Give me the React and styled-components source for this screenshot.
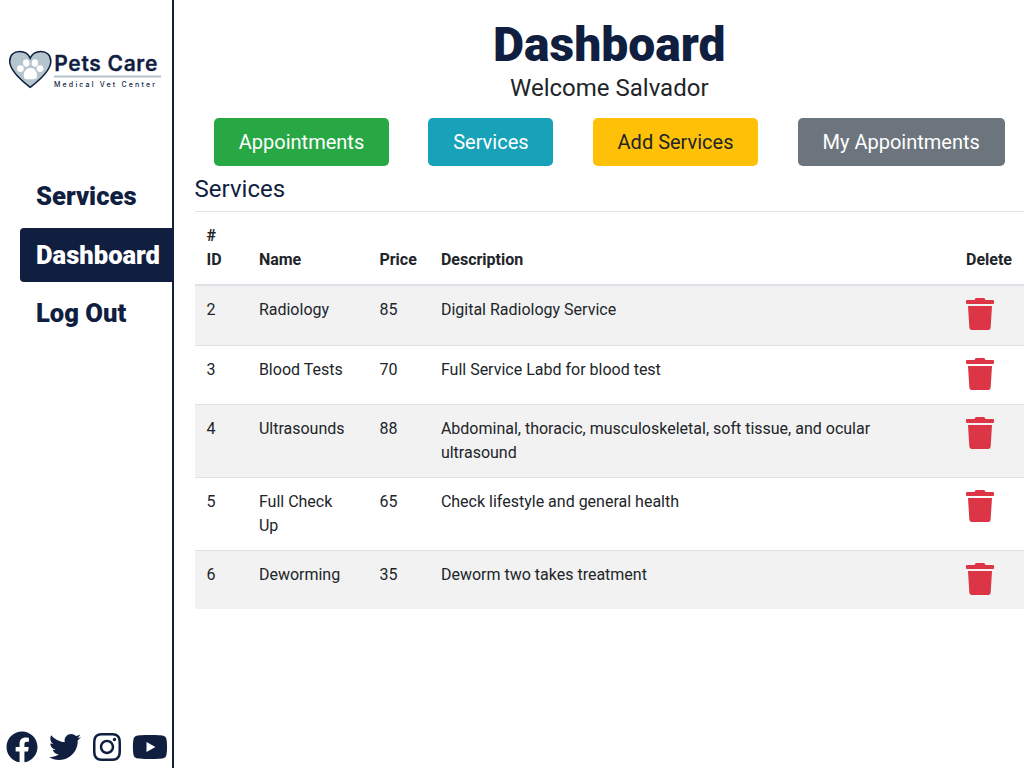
import React from "react";
import styled, { createGlobalStyle } from "styled-components";
import { FaFacebook, FaTwitter, FaInstagram, FaYoutube, FaTrash } from "react-icons/fa";

const navy = "#101e3f";

const GlobalStyle = createGlobalStyle`
  *, *::before, *::after { box-sizing: border-box; }
  body {
    margin: 0;
    background: #fff;
    color: #212529;
    font: 400 16px/1.5 Roboto, "Liberation Sans", sans-serif;
    overflow: hidden;
  }
`;

const Page = styled.div`
  display: flex;
  height: 768px;
`;

const Sidebar = styled.aside`
  display: flex;
  flex-direction: column;
  flex: none;
  width: 174px;
  border-right: 2px solid #14213d;
`;

const LogoImage = styled.svg`
  display: block;
  width: 172px;
  height: 60px;
  margin-top: 40px;
`;

const Nav = styled.nav`
  display: flex;
  flex-direction: column;
  gap: 4.2px;
  margin-top: 69.4px;
  padding-left: 20px;
`;

const NavLink = styled.a`
  height: 54.2px;
  padding: 8px 16px;
  border-radius: 4px 0 0 4px;
  background: ${(p) => (p.$active ? navy : "transparent")};
  color: ${(p) => (p.$active ? "#fff" : navy)};
  font-size: 25.6px;
  font-weight: 900;
  line-height: 38.4px;
`;

const Socials = styled.div`
  display: flex;
  gap: 11.1px;
  margin-top: auto;
  padding: 0 0 5px 6px;
  color: ${navy};

  svg { flex: none; width: 32px; height: 32px; }
  svg:nth-child(3) { width: 28px; margin-left: 0.4px; }
  svg:nth-child(4) { width: 36px; }
`;

const Main = styled.main`
  flex: 1;
  min-width: 0;
  padding: 16px 0 0 20.6px;
`;

const Title = styled.h1`
  margin: 0;
  color: ${navy};
  font-size: 48px;
  font-weight: 900;
  line-height: 58px;
  text-align: center;
`;

const Welcome = styled.p`
  margin: 0;
  font-size: 24px;
  line-height: 29px;
  text-align: center;
`;

const Actions = styled.div`
  display: flex;
  justify-content: space-between;
  margin-top: 15px;
  padding: 0 19.3px 0 19.3px;
`;

const Button = styled.button`
  height: 48px;
  padding: 0 24.9px;
  border: 0;
  border-radius: 4.8px;
  background: ${(p) => p.$bg};
  color: ${(p) => p.$color || "#fff"};
  font: 400 20px/30px Roboto, sans-serif;
`;

const SectionTitle = styled.h2`
  margin: 9px 0 7.25px;
  color: ${navy};
  font-size: 24px;
  font-weight: 400;
  line-height: 29px;
`;

const Table = styled.table`
  width: 829.4px;
  table-layout: fixed;
  border-collapse: collapse;
`;

const Col = styled.col`
  width: ${(p) => p.$w};
`;

const HeadCell = styled.th`
  padding: 12px;
  border-top: 1px solid #dee2e6;
  border-bottom: 2px solid #dee2e6;
  font-weight: 700;
  text-align: left;
  vertical-align: bottom;
`;

const Row = styled.tr`
  &:nth-child(odd) { background: #f2f2f2; }
`;

const Cell = styled.td`
  padding: 12px;
  border-top: 1px solid #dee2e6;
  vertical-align: top;
`;

const DescriptionCell = styled(Cell)`
  padding-right: 60px;
`;

const TrashIcon = styled(FaTrash)`
  display: block;
  width: 28px;
  height: 32px;
  margin-bottom: 2.3px;
  color: #dc3545;
`;

const services = [
  { id: 2, name: "Radiology", price: 85, description: "Digital Radiology Service" },
  { id: 3, name: "Blood Tests", price: 70, description: "Full Service Labd for blood test" },
  { id: 4, name: "Ultrasounds", price: 88, description: "Abdominal, thoracic, musculoskeletal, soft tissue, and ocular ultrasound" },
  { id: 5, name: "Full Check Up", price: 65, description: "Check lifestyle and general health" },
  { id: 6, name: "Deworming", price: 35, description: "Deworm two takes treatment" },
];

function Logo() {
  return (
    <LogoImage viewBox="0 0 172 60">
      <path
        d="M30.2 47.3C24 42.5 9.7 31 9.7 21.2C9.7 15 14 11.4 19.5 11.4C24.5 11.4 28.5 14 30.2 18.2C32 14 36 11.4 41 11.4C46.5 11.4 50.8 15 50.8 21.2C50.8 31 36.5 42.5 30.2 47.3Z"
        fill="#b5c5cd"
        stroke={navy}
        strokeWidth="1.5"
      />
      <g fill="#fff">
        <ellipse cx="26.2" cy="23" rx="3.2" ry="3.7" transform="rotate(-8 26.2 23)" />
        <ellipse cx="34.8" cy="23" rx="3.2" ry="3.7" transform="rotate(8 34.8 23)" />
        <ellipse cx="20.4" cy="28.6" rx="3.4" ry="3.4" />
        <ellipse cx="40" cy="28.6" rx="3.4" ry="3.4" />
        <path d="M30.4 27.8C34.5 27.8 37.4 32 37 36.2C36.6 39.8 33.2 39.2 30.4 39.2S24.2 39.8 23.8 36.2C23.4 32 26.3 27.8 30.4 27.8Z" />
      </g>
      <text x="54.3" y="30.5" fill={navy} stroke={navy} strokeWidth="0.3" fontFamily="Inter, sans-serif" fontWeight="600" fontSize="21" textLength="103" lengthAdjust="spacing">
        Pets Care
      </text>
      <path d="M54 36.5H161" stroke="#b5c5cd" strokeWidth="2.2" />
      <text x="54" y="46.5" fill={navy} fontFamily="Inter, sans-serif" fontWeight="500" fontSize="7" textLength="101" lengthAdjust="spacing">
        Medical Vet Center
      </text>
    </LogoImage>
  );
}

export default function App() {
  return (
    <>
      <GlobalStyle />
      <Page>
        <Sidebar>
          <Logo />
          <Nav>
            <NavLink>Services</NavLink>
            <NavLink $active>Dashboard</NavLink>
            <NavLink>Log Out</NavLink>
          </Nav>
          <Socials>
            <FaFacebook />
            <FaTwitter />
            <FaInstagram />
            <FaYoutube />
          </Socials>
        </Sidebar>
        <Main>
          <Title>Dashboard</Title>
          <Welcome>Welcome Salvador</Welcome>
          <Actions>
            <Button $bg="#28a745">Appointments</Button>
            <Button $bg="#17a2b8">Services</Button>
            <Button $bg="#ffc107" $color="#212529">Add Services</Button>
            <Button $bg="#6c757d">My Appointments</Button>
          </Actions>
          <SectionTitle>Services</SectionTitle>
          <Table>
            <colgroup>
              <Col $w="52.3px" />
              <Col $w="120.5px" />
              <Col $w="61.5px" />
              <Col $w="525.1px" />
              <Col $w="70px" />
            </colgroup>
            <thead>
              <tr>
                <HeadCell># ID</HeadCell>
                <HeadCell>Name</HeadCell>
                <HeadCell>Price</HeadCell>
                <HeadCell>Description</HeadCell>
                <HeadCell>Delete</HeadCell>
              </tr>
            </thead>
            <tbody>
              {services.map((s) => (
                <Row key={s.id}>
                  <Cell>{s.id}</Cell>
                  <Cell>{s.name}</Cell>
                  <Cell>{s.price}</Cell>
                  <DescriptionCell>{s.description}</DescriptionCell>
                  <Cell><TrashIcon /></Cell>
                </Row>
              ))}
            </tbody>
          </Table>
        </Main>
      </Page>
    </>
  );
}
